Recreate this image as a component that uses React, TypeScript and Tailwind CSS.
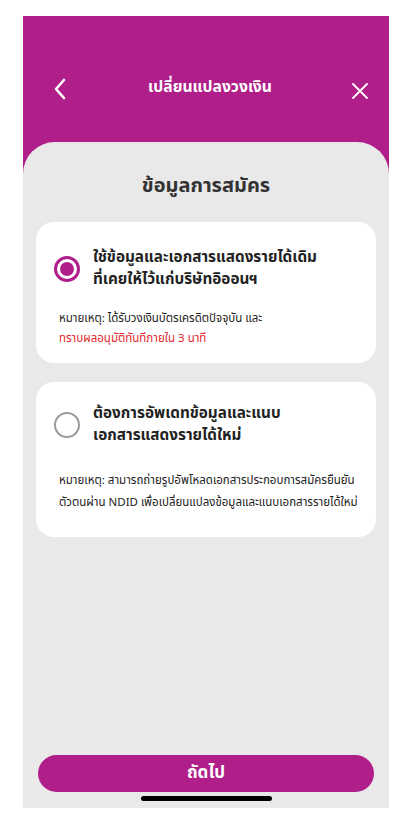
import React, { useState } from 'react'

const font = { fontFamily: '"Noto Sans Thai", "Noto Sans", "DejaVu Sans", sans-serif' }

function Radio({ checked }: { checked: boolean }) {
  if (checked) {
    return (
      <div className="w-[26px] h-[26px] rounded-full border-[3px] border-[#b01e8a] flex items-center justify-center shrink-0">
        <div className="w-[14px] h-[14px] rounded-full bg-[#b01e8a]" />
      </div>
    )
  }
  return <div className="w-[26px] h-[26px] rounded-full border-[2.5px] border-[#9a9a9a] shrink-0" />
}

export default function App() {
  const [selected, setSelected] = useState(0)

  return (
    <div className="w-[412px] h-[825px] bg-white pt-[16px]" style={font}>
      <div className="w-[366px] h-[792px] ml-[23px] bg-[#b01e8a] flex flex-col overflow-hidden">
        {/* header */}
        <div className="h-[126px] pt-[58px] px-[26px] flex items-start justify-between text-white">
          <svg width="22" height="26" viewBox="0 0 22 26" className="mt-[2px]">
            <path d="M15 4 L7 13 L15 22" stroke="white" strokeWidth="2.6" fill="none" strokeLinecap="round" strokeLinejoin="round" />
          </svg>
          <div className="text-[15.7px] font-bold leading-[26px]">เปลี่ยนแปลงวงเงิน</div>
          <svg width="22" height="26" viewBox="0 0 22 26" className="mt-[4px] -mr-[8px]">
            <path d="M4 6 L18 20 M18 6 L4 20" stroke="white" strokeWidth="1.8" fill="none" strokeLinecap="round" />
          </svg>
        </div>

        {/* sheet */}
        <div className="flex-1 bg-[#e9e9e9] rounded-t-[32px] flex flex-col px-[13px]">
          <h1 className="text-center text-[20px] font-bold text-[#333] mt-[30px] leading-[28px]">ข้อมูลการสมัคร</h1>

          <div className="mt-[22px] flex flex-col gap-[19px]">
            <div
              onClick={() => setSelected(0)}
              className="bg-white rounded-[18px] pt-[25px] px-[18px] h-[141px] cursor-pointer"
            >
              <div className="flex items-center gap-[13px]">
                <Radio checked={selected === 0} />
                <div className="text-[15.3px] font-bold text-[#222] leading-[22px]">
                  ใช้ข้อมูลและเอกสารแสดงรายได้เดิม<br />ที่เคยให้ไว้แก่บริษัทอิออนฯ
                </div>
              </div>
              <div className="mt-[18px] pl-[5px] text-[11.5px] leading-[20px] text-[#222]">
                หมายเหตุ: ได้รับวงเงินบัตรเครดิตปัจจุบัน และ
                <div className="text-[#e3262d]">ทราบผลอนุมัติทันทีภายใน 3 นาที</div>
              </div>
            </div>

            <div
              onClick={() => setSelected(1)}
              className="bg-white rounded-[18px] pt-[21px] px-[18px] h-[155px] cursor-pointer"
            >
              <div className="flex items-center gap-[13px]">
                <Radio checked={selected === 1} />
                <div className="text-[15.3px] font-bold text-[#222] leading-[22px]">
                  ต้องการอัพเดทข้อมูลและแนบ<br />เอกสารแสดงรายได้ใหม่
                </div>
              </div>
              <div className="mt-[23px] pl-[5px] text-[11.5px] leading-[22px] text-[#222] whitespace-nowrap">
                หมายเหตุ: สามารถถ่ายรูปอัพโหลดเอกสารประกอบการสมัครยืนยัน<br />
                ตัวตนผ่าน NDID เพื่อเปลี่ยนแปลงข้อมูลและแนบเอกสารรายได้ใหม่
              </div>
            </div>
          </div>

          <div className="flex-1" />

          <button className="h-[37px] mx-[2px] rounded-full bg-[#b01e8a] text-white text-[17px] font-bold">
            ถัดไป
          </button>
          <div className="h-[5px] w-[131px] bg-black rounded-full mx-auto mt-[4px] mb-[7px]" />
        </div>
      </div>
    </div>
  )
}
